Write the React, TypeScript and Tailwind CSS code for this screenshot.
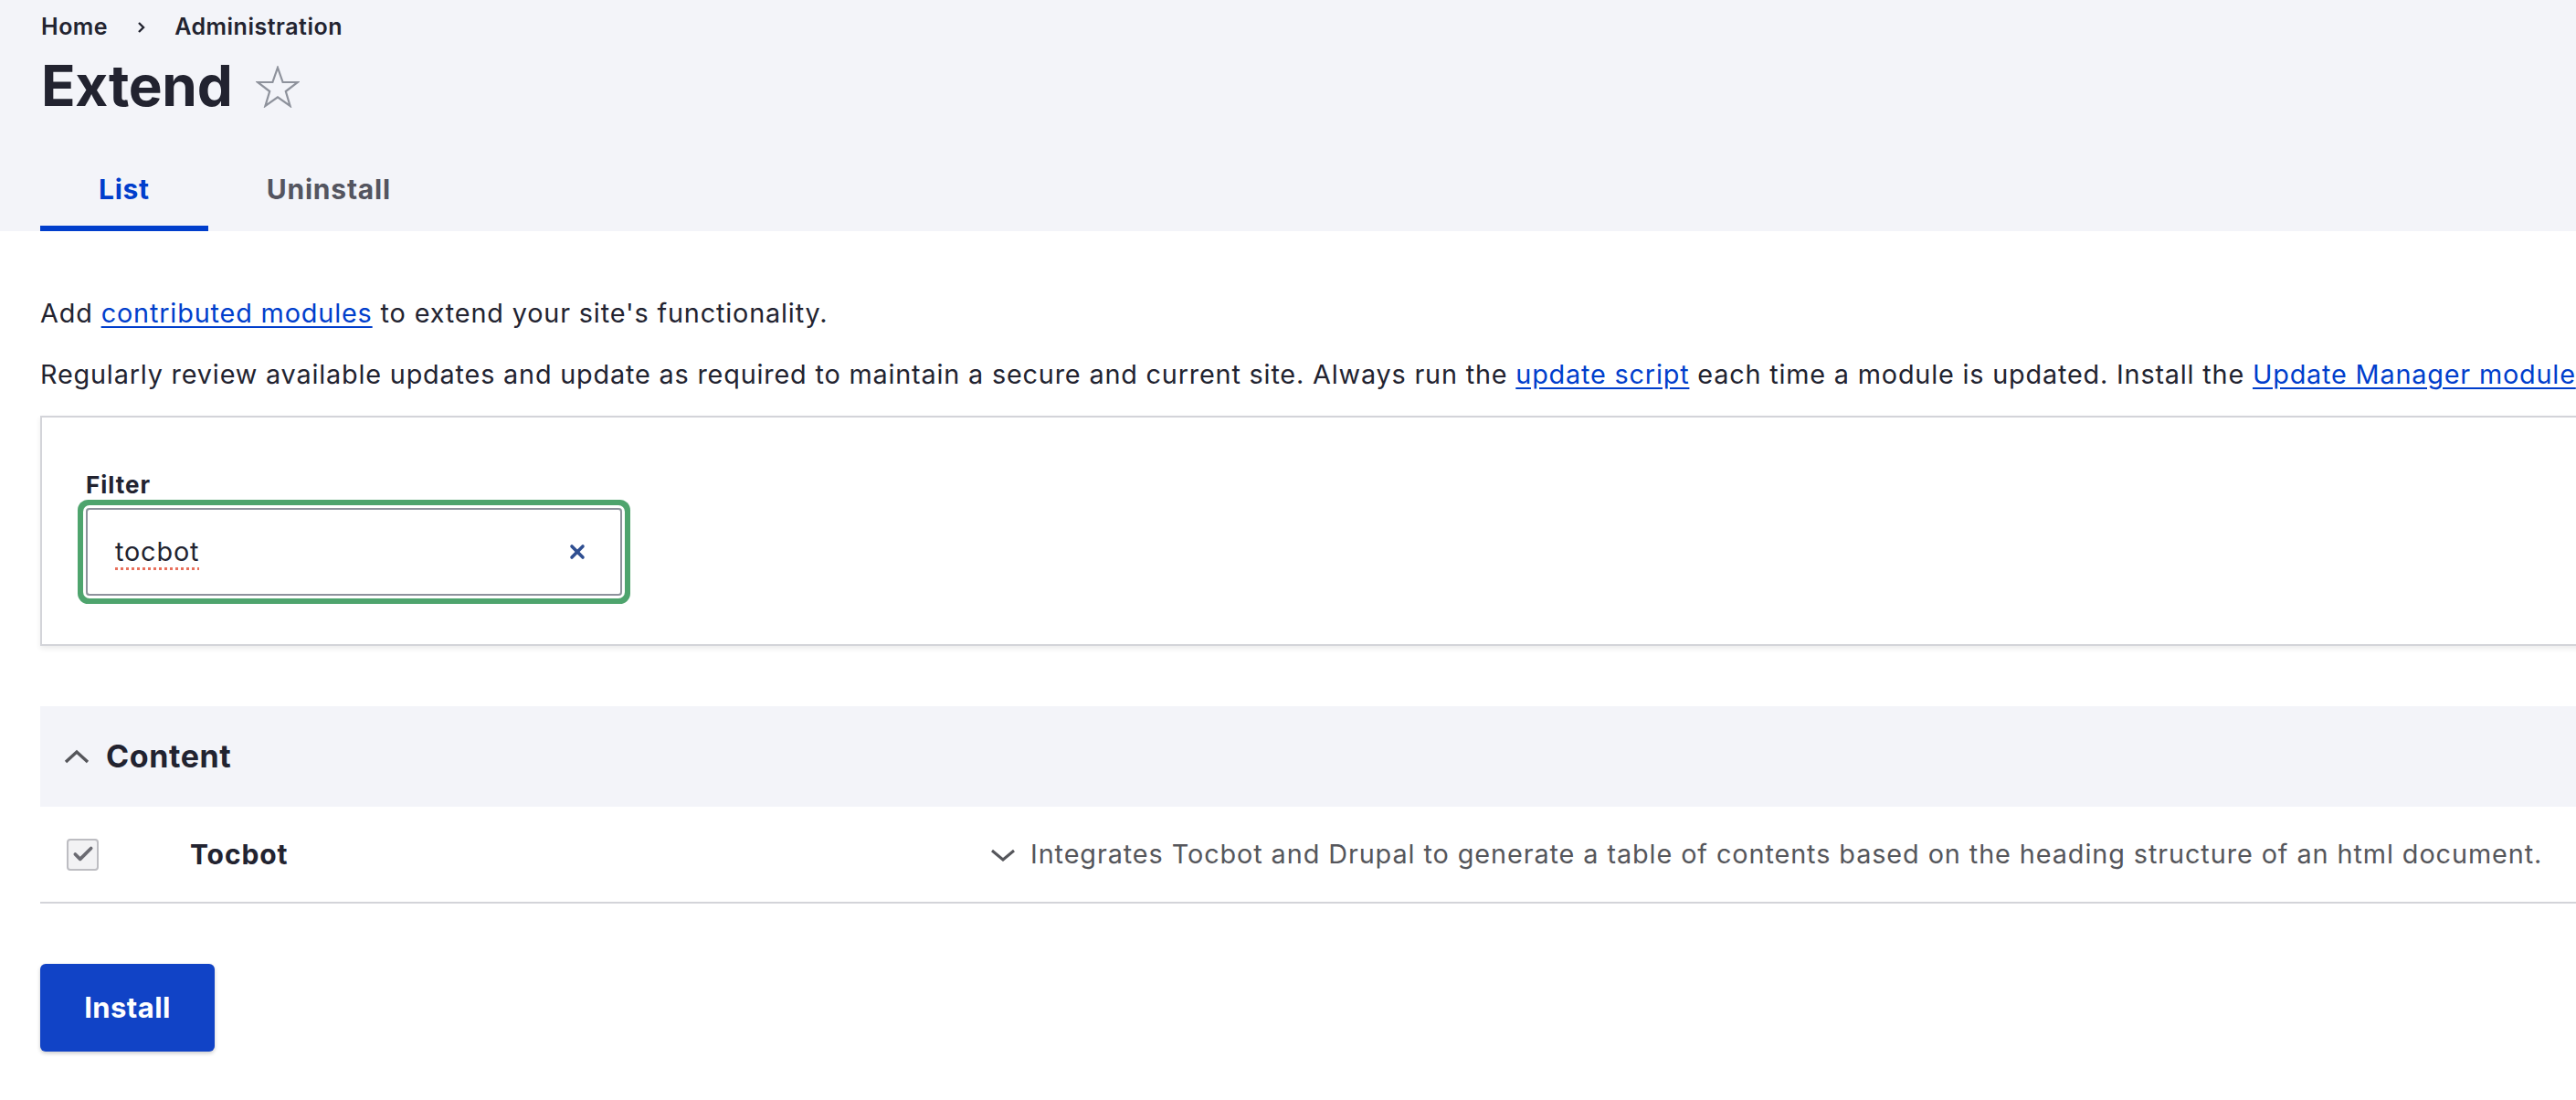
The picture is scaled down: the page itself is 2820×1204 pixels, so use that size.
import { X, Check } from 'lucide-react';

const font = { fontFamily: 'Inter, "Noto Sans", sans-serif' };

const App = () => {
  return (
    <div className="w-full min-h-screen overflow-hidden bg-white text-[#222330]" style={font}>
      <div className="w-[3300px]">
        {/* header */}
        <div className="bg-[#f3f4f9] px-[45px] pt-[15px]">
          <div className="flex items-center h-[30px] text-[25px] font-semibold tracking-[0.5px] text-[#222330]">
            <span>Home</span>
            <svg width="9" height="14" viewBox="0 0 9 14" className="mx-[32px]">
              <polyline points="2,2 7,7 2,12" fill="none" stroke="#222330" strokeWidth="2.4" />
            </svg>
            <span>Administration</span>
          </div>
          <div className="flex items-center mt-[12px] h-[74px]">
            <h1 className="text-[62px] leading-[74px] font-bold tracking-[-0.3px]">Extend</h1>
            <svg width="48" height="46" viewBox="0 0 48 46" className="ml-[26px] mt-[2px]">
              <polygon
                points="24,2 29.6,18 46,18 32.8,28 37.6,44 24,34.4 10.4,44 15.2,28 2,18 18.4,18"
                fill="none"
                stroke="#8e929c"
                strokeWidth="2.2"
                strokeLinejoin="miter"
              />
            </svg>
          </div>
          <div className="flex mt-[36px] -ml-[1px]">
            <div className="px-[64px] py-[22px] text-[30px] leading-[36px] font-bold tracking-[0.7px] text-[#003ecc] border-b-[6px] border-[#003ecc]">
              List
            </div>
            <div className="px-[64px] py-[22px] text-[30px] leading-[36px] font-bold tracking-[0.8px] text-[#545560] border-b-[6px] border-transparent">
              Uninstall
            </div>
          </div>
        </div>

        {/* main */}
        <div className="px-[44px] pt-[69px]">
          <p className="text-[28.8px] leading-[42px] tracking-[0.85px] whitespace-nowrap">
            Add <a className="text-[#003ecc] underline underline-offset-[4px]">contributed modules</a> to extend your site's functionality.
          </p>
          <p className="mt-[25px] text-[28.8px] leading-[42px] tracking-[0.82px] whitespace-nowrap">
            Regularly review available updates and update as required to maintain a secure and current site. Always run the{' '}
            <a className="text-[#003ecc] underline underline-offset-[4px]">update script</a> each time a module is updated. Install the{' '}
            <a className="text-[#003ecc] underline underline-offset-[4px]">Update Manager module</a> to update modules and themes.
          </p>

          <div className="mt-[24px] border-2 border-[#d3d4d9] bg-white pl-[48px] pt-[58px] pb-[53px] shadow-[0_3px_6px_rgba(0,0,0,0.08)]">
            <div className="text-[26px] leading-[32px] font-bold tracking-[1px]">Filter</div>
            <div className="mt-[9px] w-[587px] h-[96px] border-2 border-[#8e929c] rounded-[4px] flex items-center justify-between pl-[30px] pr-[35px] shadow-[0_0_0_3px_#fff,0_0_0_9px_#4ea46d]">
              <span className="text-[28.8px] leading-[36px] tracking-[0.85px] underline decoration-dotted decoration-[#e8705c] decoration-[3px] underline-offset-[7px]">
                tocbot
              </span>
              <X size={24} strokeWidth={3.6} color="#2f4f91" />
            </div>
          </div>

          {/* content group */}
          <div className="mt-[66px]">
            <div className="h-[110px] bg-[#f3f4f9] flex items-center pl-[26px]">
              <svg width="28" height="16" viewBox="0 0 28 16">
                <polyline points="2,14 14,3 26,14" fill="none" stroke="#55565b" strokeWidth="3.4" />
              </svg>
              <h2 className="ml-[18px] text-[34px] font-bold leading-[42px] tracking-[0.6px]">Content</h2>
            </div>
            <div className="h-[106px] flex items-center border-b-2 border-[#d3d4d9]">
              <div className="ml-[29px] w-[35px] h-[35px] rounded-[4px] border-2 border-[#bdbdc2] bg-[#f2f2f4] flex items-center justify-center">
                <Check size={26} strokeWidth={3.4} color="#6b6b72" />
              </div>
              <div className="ml-[100px] w-[876px] text-[30px] font-bold leading-[36px] tracking-[0.9px]">Tocbot</div>
              <svg width="28" height="14" viewBox="0 0 28 14" className="mt-[2px]">
                <polyline points="2,2 14,12 26,2" fill="none" stroke="#55565b" strokeWidth="3" />
              </svg>
              <span className="ml-[16px] text-[28.8px] leading-[36px] tracking-[0.92px] text-[#55565b] whitespace-nowrap">
                Integrates Tocbot and Drupal to generate a table of contents based on the heading structure of an html document.
              </span>
            </div>
          </div>

          <button className="mt-[66px] w-[191px] h-[96px] rounded-[6px] bg-[#1143c6] text-white text-[31px] font-bold tracking-[0.4px] shadow-[0_2px_4px_rgba(0,0,0,0.2)]">
            Install
          </button>
        </div>
      </div>
    </div>
  );
};

export default App;
